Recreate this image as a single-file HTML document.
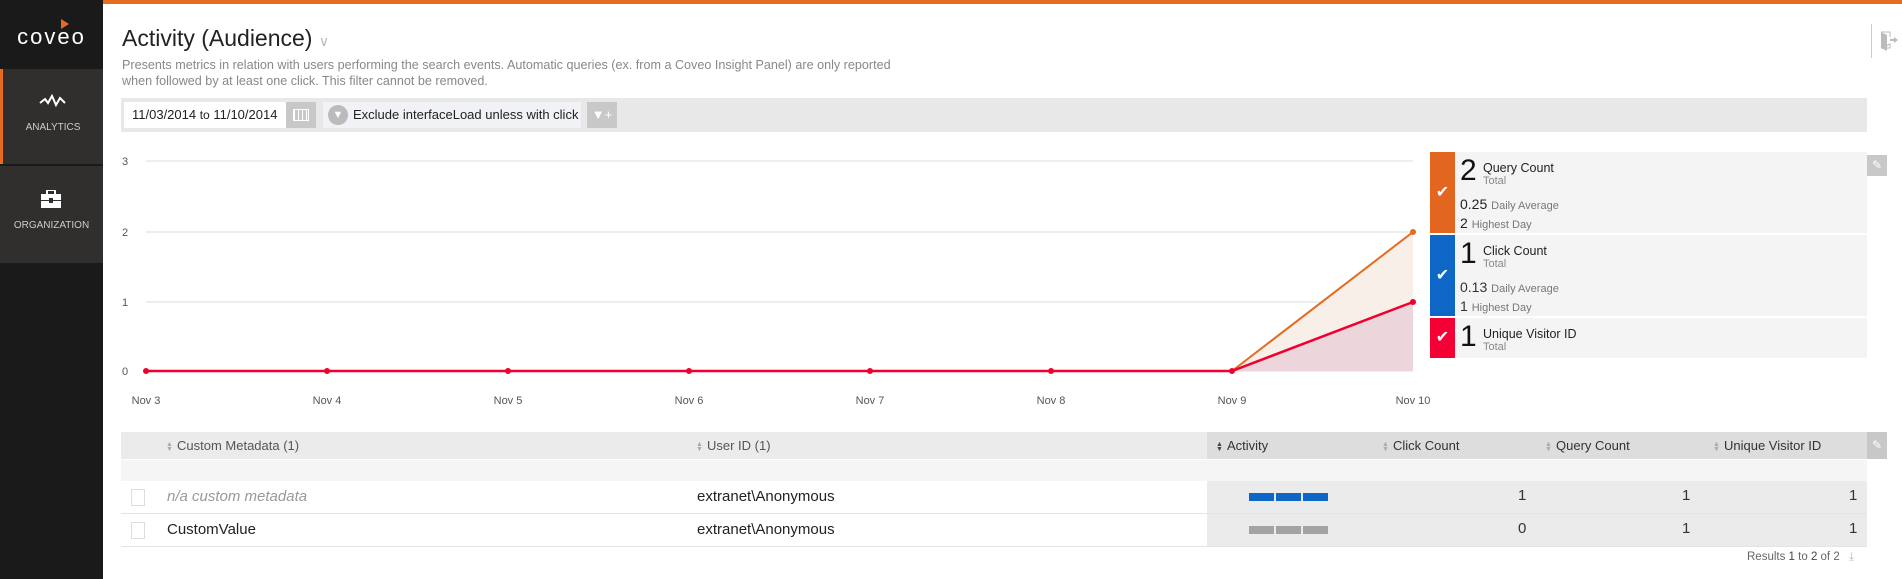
<!DOCTYPE html>
<html><head><meta charset="utf-8"><style>
*{margin:0;padding:0;box-sizing:border-box}
body{width:1902px;height:579px;overflow:hidden;background:#fff;font-family:"Liberation Sans",sans-serif;position:relative;color:#333}
.abs{position:absolute}
#side{left:0;top:0;width:103px;height:579px;background:#1b1a1a}
.tile{position:absolute;left:0;width:103px;background:#302f2d;color:#ccc;font-size:10px;text-align:center}
.hdr{font-size:13px;color:#555;top:432px;height:27px;line-height:27px}
.sort{display:inline-block;width:6px;font-size:7px;color:#aaa;line-height:5px;vertical-align:middle;margin-right:5px}
.num{font-size:15px;color:#333}
</style></head><body>
<div class="abs" style="left:103px;top:0;width:1799px;height:4px;background:#e56b1f"></div>
<div id="side" class="abs">
  <div class="abs" style="left:0;top:24px;width:103px;text-align:center;color:#fff;font-size:22px;letter-spacing:2px">coveo</div>
  <div class="abs" style="left:61px;top:19px;width:0;height:0;border-left:8px solid #e56b1f;border-top:5px solid transparent;border-bottom:5px solid transparent"></div>
  <div class="tile" style="top:69px;height:95px;border-left:3px solid #e56b1f">
    <svg width="30" height="16" style="position:absolute;left:35px;top:24px"><path d="M2 10 L7 6 L10 10 L14 3 L18 12 L22 5 L27 10" stroke="#fff" stroke-width="2" fill="none"/></svg>
    <div style="position:absolute;left:0;width:100px;top:53px">ANALYTICS</div>
  </div>
  <div class="tile" style="top:166px;height:97px">
    <svg width="20" height="18" style="position:absolute;left:41px;top:24px"><rect x="6" y="0" width="8" height="5" rx="1" fill="none" stroke="#fff" stroke-width="2"/><rect x="0" y="4" width="20" height="14" fill="#fff"/><rect x="0" y="10" width="20" height="1" fill="#302f2d"/><rect x="8" y="8" width="4" height="5" fill="#302f2d"/></svg>
    <div style="position:absolute;left:0;width:103px;top:54px">ORGANIZATION</div>
  </div>
</div>
<div class="abs" style="left:122px;top:25px;font-size:23px;color:#222">Activity (Audience) <span style="color:#bbb;font-size:14px">&#8744;</span></div>
<div class="abs" style="left:122px;top:57px;font-size:12.6px;color:#888;line-height:16px;width:900px">Presents metrics in relation with users performing the search events. Automatic queries (ex. from a Coveo Insight Panel) are only reported<br>when followed by at least one click. This filter cannot be removed.</div>
<div class="abs" style="left:121px;top:98px;width:1746px;height:34px;background:#e8e8e8"></div>
<div class="abs" style="left:124px;top:102px;width:162px;height:26px;background:#fff;font-size:13px;line-height:26px;padding-left:8px;color:#222">11/03/2014 <span style="font-size:12px">to</span> 11/10/2014</div>
<div class="abs" style="left:286px;top:102px;width:30px;height:26px;background:#c8c8c8"><div style="margin:7px 7px;width:16px;height:12px;border:1px solid #fff;background:repeating-linear-gradient(90deg,#fff 0 1px,transparent 1px 4px)"></div></div>
<div class="abs" style="left:323px;top:102px;width:258px;height:26px;background:#f1f2f5;font-size:13px;line-height:26px;padding-left:30px;color:#222">Exclude interfaceLoad unless with click</div>
<div class="abs" style="left:328px;top:105px;width:20px;height:20px;border-radius:50%;background:#bbb;color:#fff;font-size:11px;text-align:center;line-height:20px">&#9660;</div>
<div class="abs" style="left:587px;top:102px;width:30px;height:26px;background:#c8c8c8;color:#fff;font-size:13px;text-align:center;line-height:26px">&#9660;+</div>
<div class="abs" style="left:1871px;top:24px;width:1px;height:34px;background:#ccc"></div>
<svg class="abs" style="left:1880px;top:31px" width="18" height="20"><path d="M1 1h9v5M10 13v4H1z" stroke="#bbb" fill="none"/><path d="M1 1l6 3v16l-6-3z" fill="#bbb"/><path d="M10 9h5" stroke="#bbb" stroke-width="2"/><path d="M14 6l4 3-4 3z" fill="#bbb"/></svg>

<svg class="abs" style="left:110px;top:150px" width="1320" height="270">
 <g font-size="11" fill="#555" font-family="Liberation Sans">
  <text x="12" y="15">3</text><text x="12" y="86">2</text><text x="12" y="156">1</text><text x="12" y="225">0</text>
  <g stroke="#ddd"><line x1="36" y1="11" x2="1303" y2="11"/><line x1="36" y1="82" x2="1303" y2="82"/><line x1="36" y1="152" x2="1303" y2="152"/><line x1="36" y1="221" x2="1303" y2="221"/></g>
  <polygon points="1122,221 1303,82 1303,221" fill="#f9efe9"/>
  <polygon points="1122,221 1303,152 1303,221" fill="#ecd6dc"/>
  <polyline points="1122,221 1303,82" stroke="#e56b1f" stroke-width="2" fill="none"/>
  <polyline points="36,221 1122,221 1303,152" stroke="#f0002f" stroke-width="2.5" fill="none"/>
  <g fill="#f0002f"><circle cx="36" cy="221" r="3"/><circle cx="217" cy="221" r="3"/><circle cx="398" cy="221" r="3"/><circle cx="579" cy="221" r="3"/><circle cx="760" cy="221" r="3"/><circle cx="941" cy="221" r="3"/><circle cx="1122" cy="221" r="3"/><circle cx="1303" cy="152" r="3"/></g>
  <circle cx="1303" cy="82" r="3" fill="#e56b1f"/>
  <g text-anchor="middle"><text x="36" y="254">Nov 3</text><text x="217" y="254">Nov 4</text><text x="398" y="254">Nov 5</text><text x="579" y="254">Nov 6</text><text x="760" y="254">Nov 7</text><text x="941" y="254">Nov 8</text><text x="1122" y="254">Nov 9</text><text x="1303" y="254">Nov 10</text></g>
 </g>
</svg>

<div class="abs" style="left:1430px;top:152px;width:437px;height:81px;background:#f4f4f4"></div>
<div class="abs" style="left:1430px;top:235px;width:437px;height:81px;background:#f4f4f4"></div>
<div class="abs" style="left:1430px;top:318px;width:437px;height:40px;background:#f4f4f4"></div>
<div class="abs" style="left:1430px;top:152px;width:25px;height:81px;background:#e2661f;color:#fff;font-size:16px;text-align:center;line-height:81px">&#10004;</div>
<div class="abs" style="left:1430px;top:235px;width:25px;height:81px;background:#0e67c6;color:#fff;font-size:16px;text-align:center;line-height:81px">&#10004;</div>
<div class="abs" style="left:1430px;top:318px;width:25px;height:40px;background:#f40034;color:#fff;font-size:16px;text-align:center;line-height:40px">&#10004;</div>
<div class="abs" style="left:1460px;top:154px;font-size:30px;color:#111">2</div>
<div class="abs" style="left:1483px;top:162px;font-size:12.5px;line-height:12px;color:#222">Query Count<br><span style="color:#888;font-size:11px">Total</span></div>
<div class="abs" style="left:1460px;top:196px;font-size:14px;color:#222">0.25 <span style="font-size:11px;color:#777">Daily Average</span></div>
<div class="abs" style="left:1460px;top:215px;font-size:14px;color:#222">2 <span style="font-size:11px;color:#777">Highest Day</span></div>
<div class="abs" style="left:1460px;top:237px;font-size:30px;color:#111">1</div>
<div class="abs" style="left:1483px;top:245px;font-size:12.5px;line-height:12px;color:#222">Click Count<br><span style="color:#888;font-size:11px">Total</span></div>
<div class="abs" style="left:1460px;top:279px;font-size:14px;color:#333">0.13 <span style="font-size:11px;color:#777">Daily Average</span></div>
<div class="abs" style="left:1460px;top:298px;font-size:14px;color:#333">1 <span style="font-size:11px;color:#777">Highest Day</span></div>
<div class="abs" style="left:1460px;top:320px;font-size:30px;color:#111">1</div>
<div class="abs" style="left:1483px;top:328px;font-size:12.5px;line-height:12px;color:#222">Unique Visitor ID<br><span style="color:#888;font-size:11px">Total</span></div>
<div class="abs" style="left:1867px;top:155px;width:20px;height:21px;background:#c8c8c8;color:#fff;font-size:12px;text-align:center;line-height:21px">&#9998;</div>

<div class="abs" style="left:121px;top:432px;width:1746px;height:27px;background:#ebebeb"></div>
<div class="abs" style="left:1207px;top:432px;width:660px;height:27px;background:#dddddd"></div>
<div class="abs" style="left:1867px;top:432px;width:20px;height:27px;background:#c8c8c8;color:#fff;font-size:12px;text-align:center;line-height:27px">&#9998;</div>
<div class="abs hdr" style="left:166px"><span class="sort">&#9650;<br>&#9660;</span>Custom Metadata (1)</div>
<div class="abs hdr" style="left:696px"><span class="sort">&#9650;<br>&#9660;</span>User ID (1)</div>
<div class="abs hdr" style="left:1216px;color:#333"><span class="sort" style="color:#444">&#9650;<br>&#9660;</span>Activity</div>
<div class="abs hdr" style="left:1382px;color:#333"><span class="sort">&#9650;<br>&#9660;</span>Click Count</div>
<div class="abs hdr" style="left:1545px;color:#333"><span class="sort">&#9650;<br>&#9660;</span>Query Count</div>
<div class="abs hdr" style="left:1713px;color:#333"><span class="sort">&#9650;<br>&#9660;</span>Unique Visitor ID</div>
<div class="abs" style="left:121px;top:460px;width:1746px;height:21px;background:#f5f5f5"></div>
<div class="abs" style="left:121px;top:481px;width:1746px;height:33px;border-bottom:1px solid #e4e4e4"></div>
<div class="abs" style="left:121px;top:514px;width:1746px;height:33px;border-bottom:1px solid #e4e4e4"></div>
<div class="abs" style="left:1207px;top:481px;width:660px;height:32px;background:#ebebeb"></div>
<div class="abs" style="left:1207px;top:514px;width:660px;height:32px;background:#ebebeb"></div>
<div class="abs" style="left:131px;top:489px;width:14px;height:17px;border:1px solid #ddd;background:#fff"></div>
<div class="abs" style="left:131px;top:522px;width:14px;height:17px;border:1px solid #ddd;background:#fff"></div>
<div class="abs" style="left:167px;top:488px;font-size:15px;font-style:italic;color:#999">n/a custom metadata</div>
<div class="abs" style="left:167px;top:521px;font-size:15px;color:#222">CustomValue</div>
<div class="abs" style="left:697px;top:488px;font-size:15px;color:#222">extranet\Anonymous</div>
<div class="abs" style="left:697px;top:521px;font-size:15px;color:#222">extranet\Anonymous</div>
<div class="abs" style="left:1249px;top:493px;width:79px;height:8px;background:linear-gradient(90deg,#0e67c6 0 25px,transparent 25px 27px,#0e67c6 27px 52px,transparent 52px 54px,#0e67c6 54px)"></div>
<div class="abs" style="left:1249px;top:526px;width:79px;height:8px;background:linear-gradient(90deg,#a3a3a3 0 25px,transparent 25px 27px,#a3a3a3 27px 52px,transparent 52px 54px,#a3a3a3 54px)"></div>
<div class="abs num" style="left:1518px;top:487px">1</div>
<div class="abs num" style="left:1518px;top:520px">0</div>
<div class="abs num" style="left:1682px;top:487px">1</div>
<div class="abs num" style="left:1682px;top:520px">1</div>
<div class="abs num" style="left:1849px;top:487px">1</div>
<div class="abs num" style="left:1849px;top:520px">1</div>
<div class="abs" style="left:1747px;top:551px;font-size:11.5px;color:#666">Results <b style="color:#444;font-weight:normal">1</b> to <b style="color:#444;font-weight:normal">2</b> of 2 <span style="color:#bbb;margin-left:6px">&#10515;</span></div>
</body></html>
